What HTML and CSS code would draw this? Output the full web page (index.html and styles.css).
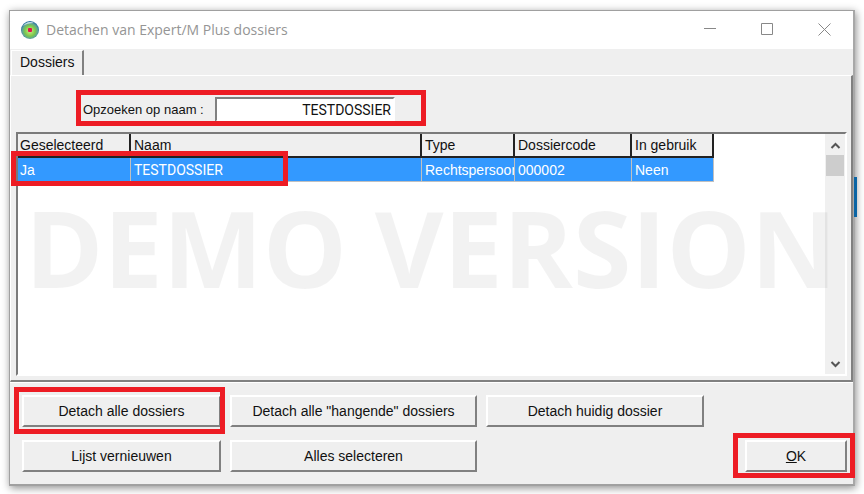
FILE: index.html
```html
<!DOCTYPE html>
<html lang="nl">
<head>
    <meta charset="UTF-8">
    <meta name="viewport" content="width=device-width, initial-scale=1.0">
    <title>Detachen van Expert/M Plus dossiers</title>
    <link rel="stylesheet" href="styles.css">
</head>
<body>

<div class="window">
    <header class="title-bar">
        <svg class="app-icon" width="20" height="20" viewBox="0 0 20 20">
            <defs>
                <radialGradient id="ball" cx="50%" cy="55%" r="52%">
                    <stop offset="0" stop-color="#d4ea8c"/>
                    <stop offset="0.55" stop-color="#7cc84a"/>
                    <stop offset="0.8" stop-color="#5fa890"/>
                    <stop offset="1" stop-color="#2a6fa0"/>
                </radialGradient>
            </defs>
            <circle cx="10" cy="10" r="9" fill="url(#ball)"/>
            <path d="M3 6a8 8 0 0 1 11-3q-7 0-11 3z" fill="#e3f2f8" opacity="0.8"/>
            <rect x="8" y="8" width="4" height="4" rx="1" fill="#e0104c"/>
        </svg>
        <h1>Detachen van Expert/M Plus dossiers</h1>
        <div class="window-controls">
            <button type="button" aria-label="Minimaliseren">
                <svg width="13" height="13" viewBox="0 0 13 13"><path d="M0 5.500h12"/></svg>
            </button>
            <button type="button" aria-label="Maximaliseren">
                <svg width="13" height="13" viewBox="0 0 13 13"><path d="M.5.5h11v11H.5z"/></svg>
            </button>
            <button type="button" aria-label="Sluiten">
                <svg width="13" height="13" viewBox="0 0 13 13"><path d="M.5.5l12 12M12.500.5l-12 12"/></svg>
            </button>
        </div>
    </header>

    <nav class="tabs">
        <button type="button" class="tab">Dossiers</button>
    </nav>

    <main class="panel">
        <div class="search marked">
            <label for="naam">Opzoeken op naam :</label>
            <input type="text" id="naam" name="naam" value="TESTDOSSIER">
        </div>

        <div class="list">
            <div class="list-body">
                <table>
                    <colgroup>
                        <col class="col-selected">
                        <col class="col-name">
                        <col class="col-type">
                        <col class="col-code">
                        <col class="col-used">
                    </colgroup>
                    <thead>
                        <tr>
                            <th>Geselecteerd</th>
                            <th>Naam</th>
                            <th>Type</th>
                            <th>Dossiercode</th>
                            <th>In gebruik</th>
                        </tr>
                    </thead>
                    <tbody>
                        <tr>
                            <td>Ja</td>
                            <td class="name">TESTDOSSIER</td>
                            <td>Rechtspersoon</td>
                            <td>000002</td>
                            <td>Neen</td>
                        </tr>
                    </tbody>
                </table>
                <div class="row-mark"></div>
            </div>
            <div class="scrollbar">
                <svg width="11" height="9" viewBox="0 0 11 9"><path d="M1.500 7l4-4 4 4"/></svg>
                <div class="thumb"></div>
                <svg width="11" height="9" viewBox="0 0 11 9"><path d="M1.500 2l4 4 4-4"/></svg>
            </div>
            <div class="watermark">DEMO VERSION</div>
        </div>
    </main>

    <footer class="actions">
        <button type="button" class="btn marked">Detach alle dossiers</button>
        <button type="button" class="btn">Detach alle "hangende" dossiers</button>
        <button type="button" class="btn">Detach huidig dossier</button>
        <button type="button" class="btn btn-refresh">Lijst vernieuwen</button>
        <button type="button" class="btn">Alles selecteren</button>
        <button type="button" class="btn btn-ok marked"><u>O</u>K</button>
    </footer>
</div>

</body>
</html>
```

FILE: styles.css
```css
* {
    box-sizing: border-box;
}

body {
    margin: 0;
    padding: 10px 9px 8px 9px;
    min-height: 100vh;
    display: flex;
    background: #fff;
    font-family: "Liberation Sans", Arial, sans-serif;
    font-size: 14px;
    line-height: 16px;
    color: #111;
}

button, input {
    font: inherit;
    color: inherit;
}

.window {
    position: relative;
    flex: 1;
    min-width: 0;
    display: flex;
    flex-direction: column;
    background: #efefef;
    border: 1px solid #a0a0a0;
    border-right: 2px solid #a8a8a8;
    border-bottom: 2px solid #a0a0a0;
    box-shadow: 1px 2px 8px rgba(0, 0, 0, 0.45);
}

/* edge of the window behind this one */
.window::before {
    content: "";
    position: absolute;
    top: 166px;
    right: -4px;
    width: 3px;
    height: 40px;
    background: #0a64a4;
}

/* title bar */
.title-bar {
    display: flex;
    align-items: center;
    height: 38px;
    padding-left: 10px;
    background: #fff;
}

.title-bar h1 {
    flex: 1;
    margin: 0 0 0 6px;
    font-family: "Open Sans", sans-serif;
    font-size: 14px;
    font-weight: normal;
    line-height: 20px;
    color: #959595;
}

.window-controls {
    display: flex;
}

.window-controls button {
    width: 57px;
    height: 38px;
    padding: 0 0 2px;
    border: none;
    background: none;
}

.window-controls svg {
    display: block;
    margin: 0 auto;
    fill: none;
    stroke: #888;
}

/* tabs */
.tabs {
    display: flex;
    height: 26px;
    padding-left: 1px;
}

.tab {
    width: 73px;
    height: 26px;
    margin-top: 1px;
    padding: 0 6px 4px 8px;
    text-align: left;
    background: #efefef;
    border: 1px solid #fff;
    border-right: 2px solid #808080;
    border-bottom: none;
}

.panel {
    flex: 1;
    display: flex;
    flex-direction: column;
    padding: 14px 4px 4px 5px;
    border-top: 1px solid #fff;
    border-left: 1px solid #fff;
    border-right: 2px solid #808080;
    border-bottom: 2px solid #808080;
}

/* red frames */
.marked {
    position: relative;
}

.marked::after {
    content: "";
    position: absolute;
    border: 5px solid #ed1c24;
    pointer-events: none;
}

.search {
    display: flex;
    align-items: center;
    align-self: flex-start;
    width: 350px;
    height: 36px;
    margin: 0 0 6px 60px;
    padding: 3px 0 0 7px;
}

.search::after {
    inset: 0;
}

.search label {
    width: 132px;
    font-size: 13px;
}

.search input {
    width: 180px;
    height: 25px;
    padding: 0 2px 0 4px;
    text-align: right;
    font-family: Roboto, sans-serif;
    background: #fff;
    border: 2px solid;
    border-color: #808080 #fff #fff #808080;
    outline: none;
}

/* list */
.list {
    position: relative;
    flex: 1;
    display: flex;
    background: #fff;
    border: 2px solid;
    border-color: #7a7a7a #fff #fff #7a7a7a;
}

.list-body {
    flex: 1;
    min-width: 0;
    position: relative;
}

.watermark {
    position: absolute;
    top: 58px;
    left: 7px;
    font-family: "Open Sans", sans-serif;
    font-size: 106px;
    font-weight: bold;
    line-height: 110px;
    white-space: nowrap;
    color: rgba(0, 0, 0, 0.05);
    pointer-events: none;
}

table {
    width: 696px;
    table-layout: fixed;
    border-collapse: separate;
    border-spacing: 0;
}

.col-selected {
    width: 113px;
}

.col-name {
    width: 291px;
}

.col-type {
    width: 93px;
}

.col-code {
    width: 117px;
}

.col-used {
    width: 82px;
}

th, td {
    height: 24px;
    padding: 0 0 0 3px;
    text-align: left;
    font-weight: normal;
    white-space: nowrap;
    overflow: hidden;
}

th {
    background: #efefef;
    border-right: 2px solid #222;
    border-bottom: 2px solid #222;
}

td {
    color: #fff;
    background: #3399ff;
    border-right: 1px solid #c0c0c0;
    border-bottom: 1px solid #c0c0c0;
}

th:first-child, td:first-child {
    padding-left: 2px;
}

.name {
    font-family: Roboto, sans-serif;
}

.row-mark {
    position: absolute;
    top: 17px;
    left: -7px;
    width: 277px;
    height: 35px;
    border: 5px solid #ed1c24;
}

.scrollbar {
    width: 20px;
    display: flex;
    flex-direction: column;
    align-items: center;
    padding: 7px 0 5px;
    background: #f0f0f0;
}

.scrollbar svg {
    fill: none;
    stroke: #555;
    stroke-width: 2;
}

.thumb {
    width: 18px;
    height: 21px;
    margin: 5px 0 auto;
    background: #cdcdcd;
}

/* buttons */
.actions {
    display: grid;
    grid-template-columns: 199px 247px 218px 1fr;
    gap: 13px 9px;
    padding: 12px 6px 12px 12px;
    border-top: 1px solid #fff;
}

.btn {
    height: 32px;
    padding: 0;
    background: #efefef;
    border: 2px solid;
    border-color: #fff #808080 #808080 #fff;
}

.btn-refresh {
    grid-column: 1;
}

.btn.marked::after {
    inset: -10px -6px -9px -10px;
}

.btn-ok {
    grid-column: 3 / -1;
    justify-self: end;
    width: 102px;
}

.btn-ok.marked::after {
    inset: -9px -10px -8px -14px;
}
```
